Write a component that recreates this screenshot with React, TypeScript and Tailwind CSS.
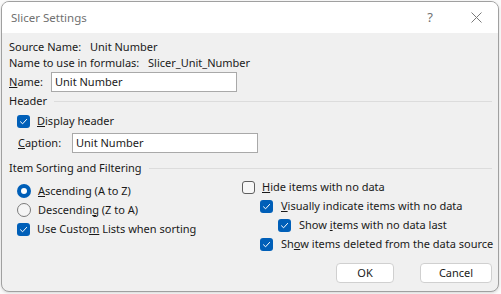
import React from 'react';

const font = { fontFamily: '"Noto Sans", "Open Sans", sans-serif' };

function Check({ checked }: { checked: boolean }) {
  if (!checked) {
    return <span className="block w-[13px] h-[13px] rounded-[3px] border border-[#5f5f5f] bg-[#f7f7f7] shrink-0" />;
  }
  return (
    <span className="flex items-center justify-center w-[13px] h-[13px] rounded-[3px] bg-[#005fb8] shrink-0">
      <svg width="9" height="9" viewBox="0 0 9 9" fill="none">
        <path d="M1.5 4.8 L3.6 6.8 L7.6 2.4" stroke="white" strokeWidth="1" strokeLinecap="round" strokeLinejoin="round" />
      </svg>
    </span>
  );
}

function Radio({ checked }: { checked: boolean }) {
  if (checked) {
    return (
      <span className="flex items-center justify-center w-[14px] h-[14px] rounded-full bg-[#005fb8] shrink-0">
        <span className="block w-[6px] h-[6px] rounded-full bg-white" />
      </span>
    );
  }
  return <span className="block w-[14px] h-[14px] rounded-full border border-[#7a7a7a] bg-[#f5f5f5] shrink-0" />;
}

function GroupTitle({ label }: { label: string }) {
  return (
    <div className="flex items-center h-4 pr-[6px]">
      <span>{label}</span>
      <div className="flex-1 h-px bg-[#dcdcdc] ml-[7px]" />
    </div>
  );
}

export default function App() {
  return (
    <div className="w-[501px] h-[294px] bg-[#fafafa] pt-px pl-px text-[11px] text-[#1a1a1a] whitespace-nowrap" style={font}>
      <div className="w-[498px] h-[291px] rounded-[8px] border border-[#a0a0a0] bg-[#f0f0f0] overflow-hidden shadow-[0_1px_3px_rgba(0,0,0,0.15)]">
        {/* title bar */}
        <div className="h-[31px] bg-white flex items-center pl-[9px]">
          <span className="text-[11.5px] text-[#707070] flex-1">Slicer Settings</span>
          <span className="text-[13px] text-[#707070] mr-[38px]">?</span>
          <svg width="11" height="11" viewBox="0 0 11 11" className="mr-[16px]">
            <path d="M0.5 0.5 L10.5 10.5 M10.5 0.5 L0.5 10.5" stroke="#7a7a7a" strokeWidth="1" />
          </svg>
        </div>

        <div className="pl-[7px] pt-[6px]">
          <div className="flex h-4 items-center">
            <span className="w-[81px] shrink-0">Source Name:</span>
            <span>Unit Number</span>
          </div>
          <div className="flex h-4 items-center">
            <span className="w-[139px] shrink-0">Name to use in formulas:</span>
            <span>Slicer_Unit_Number</span>
          </div>
          <div className="flex items-center mt-[1px] h-5">
            <span className="w-[42px] shrink-0"><span className="underline">N</span>ame:</span>
            <div className="w-[186px] h-5 bg-white border border-[#a9a9a9] flex items-center pl-[3px]">Unit Number</div>
          </div>

          <div className="mt-[1px]">
            <GroupTitle label="Header" />
          </div>
          <div className="flex items-center gap-[7px] pl-[8px] mt-[2px] h-5">
            <Check checked />
            <span><span className="underline">D</span>isplay header</span>
          </div>
          <div className="flex items-center pl-[9px] mt-[2px] h-5">
            <span className="w-[54px] shrink-0"><span className="underline">C</span>aption:</span>
            <div className="w-[186px] h-5 bg-white border border-[#a9a9a9] flex items-center pl-[3px]">Unit Number</div>
          </div>

          <div className="mt-[7px]">
            <GroupTitle label="Item Sorting and Filtering" />
          </div>

          <div className="flex mt-[5px]">
            <div className="w-[233px] shrink-0 pl-[8px]">
              <div className="flex items-center gap-[7px] h-5">
                <Radio checked />
                <span><span className="underline">A</span>scending (A to Z)</span>
              </div>
              <div className="flex items-center gap-[7px] h-5 mt-[-1px]">
                <Radio checked={false} />
                <span>Descendin<span className="underline">g</span> (Z to A)</span>
              </div>
              <div className="flex items-center gap-[7px] h-5 mt-[-1px]">
                <Check checked />
                <span>Use Custo<span className="underline">m</span> Lists when sorting</span>
              </div>
            </div>

            <div className="flex-1 mt-[-3px]">
              <div className="flex items-center gap-[7px] h-[18px]">
                <Check checked={false} />
                <span><span className="underline">H</span>ide items with no data</span>
              </div>
              <div className="flex items-center gap-[8px] h-[18px] pl-[18px] mt-px">
                <Check checked />
                <span><span className="underline">V</span>isually indicate items with no data</span>
              </div>
              <div className="flex items-center gap-[8px] h-[18px] pl-[36px] mt-px">
                <Check checked />
                <span>Show <span className="underline">i</span>tems with no data last</span>
              </div>
              <div className="flex items-center gap-[8px] h-[18px] pl-[18px] mt-px">
                <Check checked />
                <span>Sh<span className="underline">o</span>w items deleted from the data source</span>
              </div>
              <div className="flex gap-[26px] mt-[10px] pl-[94px]">
                <button className="w-[58px] h-[20px] bg-white border border-[#d0d0d0] rounded-[4px] text-[11px]">OK</button>
                <button className="w-[72px] h-[20px] bg-white border border-[#d0d0d0] rounded-[4px] text-[11px]">Cancel</button>
              </div>
            </div>
          </div>
        </div>
      </div>
    </div>
  );
}
